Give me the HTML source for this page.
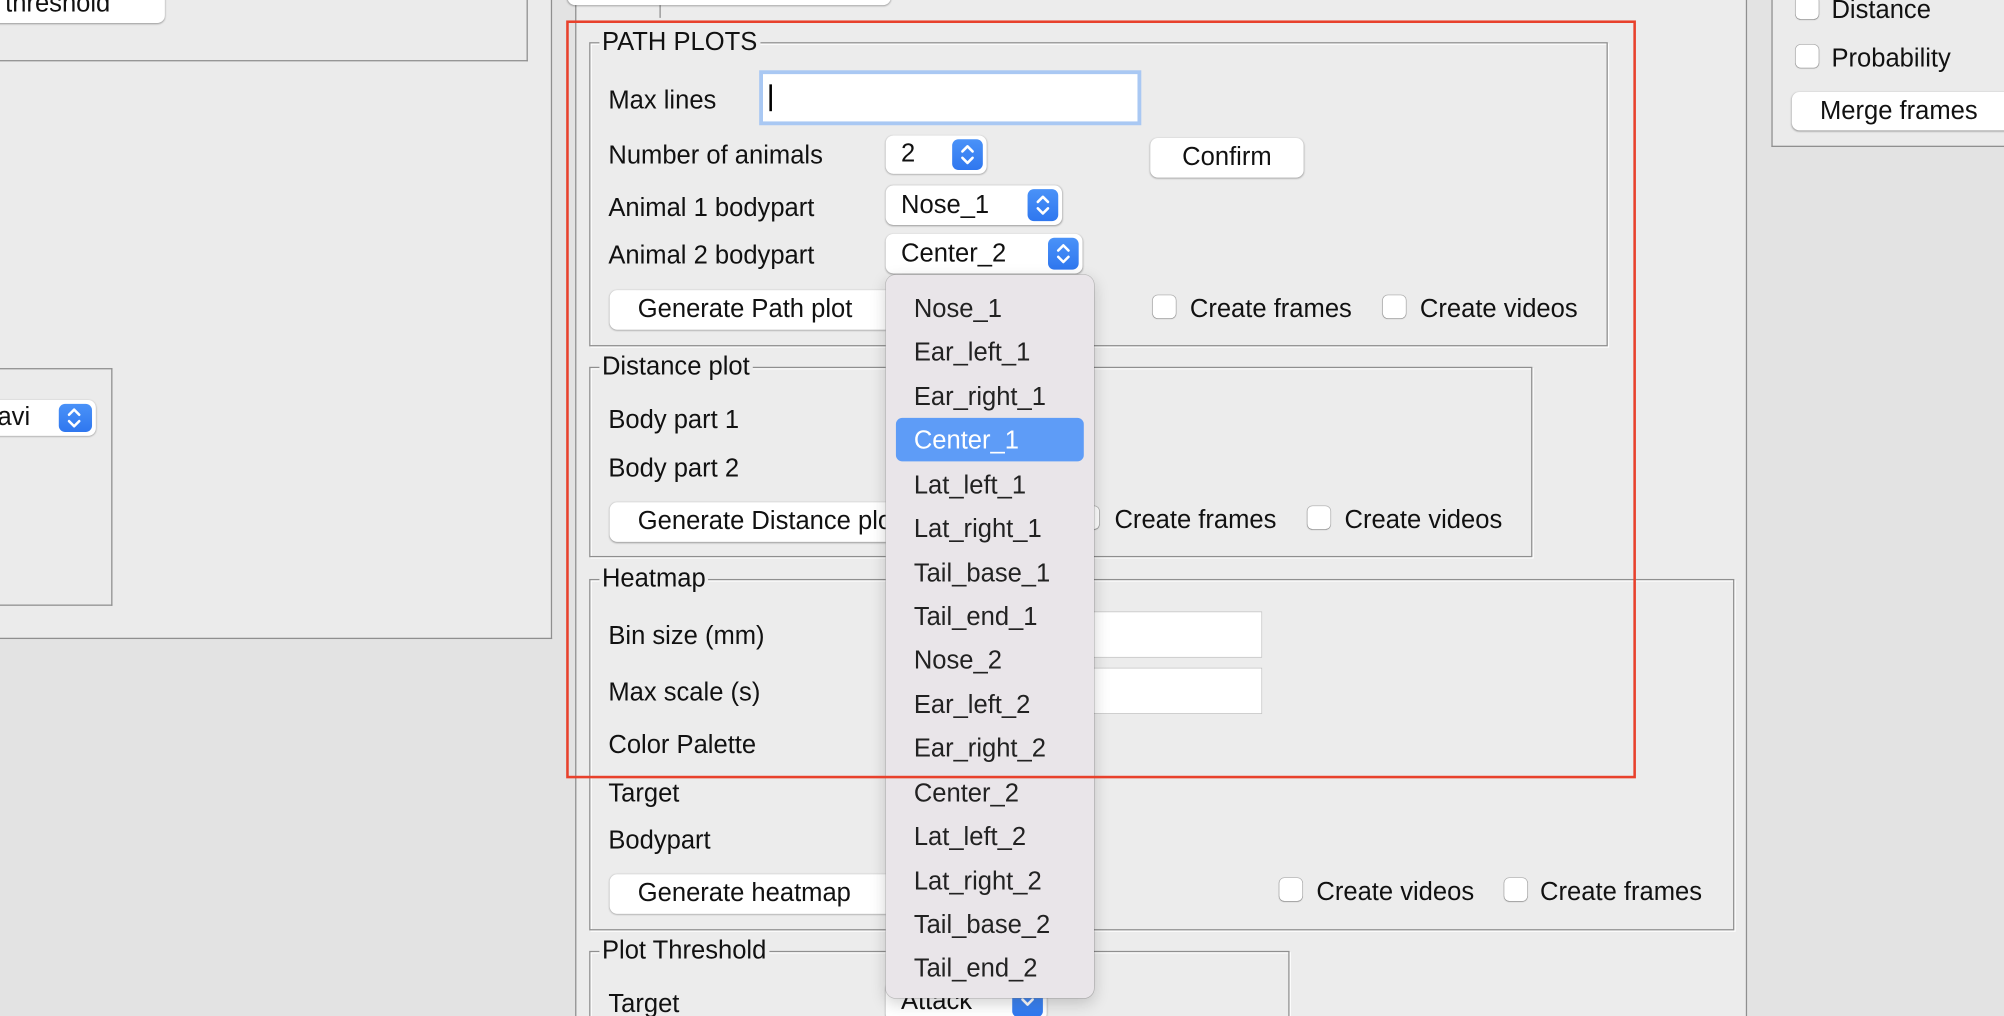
<!DOCTYPE html>
<html><head><meta charset="utf-8"><style>
html,body{margin:0;padding:0;width:2004px;height:1016px;overflow:hidden;background:#e3e3e3}
#s{position:absolute;left:0;top:0;width:1568px;height:795px;overflow:hidden;transform:scale(1.27806);transform-origin:0 0;font-family:"Liberation Sans",sans-serif;color:#111}
.a{position:absolute}
.t{position:absolute;font-size:20px;line-height:24px;white-space:nowrap}
.fs{position:absolute;border:1.5px solid #8f8f8f;box-shadow:inset 1px 1px 0 #fff,1px 1px 0 #fff}
.lg{position:absolute;font-size:20px;line-height:22px;background:#ececec;padding:0 2px;white-space:nowrap}
.btn{position:absolute;background:#fff;border-radius:6px;box-shadow:0 0.5px 1.5px rgba(0,0,0,.35);font-size:20px;line-height:31px;text-align:center;white-space:nowrap;overflow:hidden}
.sel{position:absolute;background:#fff;border-radius:6px;box-shadow:0 0.5px 1.5px rgba(0,0,0,.35);font-size:20px;white-space:nowrap}
.sel span{position:absolute;left:12px;top:50%;transform:translateY(-50%)}
.tab{position:absolute;right:3px;top:3px;bottom:3px;width:24px;border-radius:5px;background:linear-gradient(#4a92f8,#2f77ef)}
.tab svg{position:absolute;left:0;top:0;width:24px;height:100%}
.cb{position:absolute;width:18px;height:18px;background:#fff;border-radius:4px;box-shadow:0 0 0 .5px rgba(0,0,0,.25),0 .5px 1px rgba(0,0,0,.2)}
.inp{position:absolute;background:#fff;box-shadow:0 0 0 .5px #bbb}
.mi{position:absolute;left:22px;font-size:20px;line-height:24px;color:#222}
</style></head><body><div id="s">
<div class="a" style="left:0;top:0;width:431px;height:499px;background:#ebebeb;border-right:1.5px solid #8f8f8f;border-bottom:1.5px solid #8f8f8f"></div>
<div class="a" style="left:0;top:0;width:412px;height:47px;border-right:1.5px solid #8f8f8f;border-bottom:1.5px solid #8f8f8f"></div>
<div class="btn" style="left:-10px;top:-12px;width:125px;height:30px;text-align:left;padding-left:14px;line-height:30px">threshold</div>
<div class="a" style="left:0;top:288px;width:87px;height:184px;border-top:1.5px solid #8f8f8f;border-right:1.5px solid #8f8f8f;border-bottom:1.5px solid #8f8f8f"></div>
<div class="sel" style="left:-10px;top:313px;width:85px;height:28px"><span style="left:8px">avi</span><div class="tab" style="width:26px"><svg viewBox="0 0 24 22"><path d="M8 8.5l4-4 4 4M8 13.5l4 4 4-4" stroke="#fff" stroke-width="2" fill="none" stroke-linecap="round" stroke-linejoin="round"/></svg></div></div>
<div class="a" style="left:450px;top:-2px;width:915px;height:820px;background:#ececec;border-left:1.5px solid #8f8f8f;border-right:1.5px solid #8f8f8f"></div>
<div class="a" style="left:461px;top:-2px;width:55px;height:16px;border-right:1.5px solid #8f8f8f"></div>
<div class="btn" style="left:444px;top:-20px;width:253px;height:24px"></div>
<div class="a" style="left:1386px;top:-2px;width:200px;height:116px;background:#ebebeb;border-left:1.5px solid #8f8f8f;border-bottom:1.5px solid #8f8f8f"></div>
<div class="cb" style="left:1405px;top:-3px"></div><div class="t" style="left:1433px;top:-4px">Distance</div>
<div class="cb" style="left:1405px;top:35px"></div><div class="t" style="left:1433px;top:34px">Probability</div>
<div class="btn" style="left:1402px;top:72px;width:180px;height:30px;text-align:left;padding-left:22px">Merge frames</div>

<div class="fs" style="left:461px;top:33px;width:795px;height:236px"></div>
<div class="lg" style="left:469px;top:22px">PATH PLOTS</div>
<div class="t" style="left:476px;top:67px">Max lines</div>
<div class="inp" style="left:597px;top:58px;width:293px;height:37px;box-shadow:0 0 0 3px #a9c8f3,0 0 0 1px #7aa7e9"></div>
<div class="a" style="left:602px;top:66px;width:1.5px;height:21px;background:#000"></div>
<div class="t" style="left:476px;top:110px">Number of animals</div>
<div class="sel" style="left:693px;top:106px;width:79px;height:30px"><span>2</span><div class="tab"><svg viewBox="0 0 24 24"><path d="M8 9.5l4-4 4 4M8 14.5l4 4 4-4" stroke="#fff" stroke-width="2" fill="none" stroke-linecap="round" stroke-linejoin="round"/></svg></div></div>
<div class="btn" style="left:900px;top:108px;width:120px;height:31px">Confirm</div>
<div class="t" style="left:476px;top:151px">Animal 1 bodypart</div>
<div class="sel" style="left:693px;top:145px;width:138px;height:31px"><span>Nose_1</span><div class="tab"><svg viewBox="0 0 24 25"><path d="M8 10l4-4 4 4M8 15l4 4 4-4" stroke="#fff" stroke-width="2" fill="none" stroke-linecap="round" stroke-linejoin="round"/></svg></div></div>
<div class="t" style="left:476px;top:188px">Animal 2 bodypart</div>
<div class="sel" style="left:693px;top:183px;width:154px;height:31px"><span>Center_2</span><div class="tab"><svg viewBox="0 0 24 25"><path d="M8 10l4-4 4 4M8 15l4 4 4-4" stroke="#fff" stroke-width="2" fill="none" stroke-linecap="round" stroke-linejoin="round"/></svg></div></div>
<div class="btn" style="left:477px;top:227px;width:240px;height:31px;text-align:left;padding-left:22px">Generate Path plot</div>
<div class="cb" style="left:902px;top:231px"></div><div class="t" style="left:931px;top:230px">Create frames</div>
<div class="cb" style="left:1082px;top:231px"></div><div class="t" style="left:1111px;top:230px">Create videos</div>

<div class="fs" style="left:461px;top:287px;width:736px;height:147px"></div>
<div class="lg" style="left:469px;top:276px">Distance plot</div>
<div class="t" style="left:476px;top:317px">Body part 1</div>
<div class="t" style="left:476px;top:355px">Body part 2</div>
<div class="btn" style="left:477px;top:393px;width:240px;height:31px;text-align:left;padding-left:22px">Generate Distance plot</div>
<div class="cb" style="left:842px;top:396px"></div><div class="t" style="left:872px;top:395px">Create frames</div>
<div class="cb" style="left:1023px;top:396px"></div><div class="t" style="left:1052px;top:395px">Create videos</div>

<div class="fs" style="left:461px;top:453px;width:894px;height:273px"></div>
<div class="lg" style="left:469px;top:442px">Heatmap</div>
<div class="t" style="left:476px;top:486px">Bin size (mm)</div>
<div class="inp" style="left:700px;top:479px;width:287px;height:35px"></div>
<div class="t" style="left:476px;top:530px">Max scale (s)</div>
<div class="inp" style="left:700px;top:523px;width:287px;height:35px"></div>
<div class="t" style="left:476px;top:571px">Color Palette</div>
<div class="t" style="left:476px;top:609px">Target</div>
<div class="t" style="left:476px;top:646px">Bodypart</div>
<div class="btn" style="left:477px;top:684px;width:240px;height:31px;text-align:left;padding-left:22px">Generate heatmap</div>
<div class="cb" style="left:1001px;top:687px"></div><div class="t" style="left:1030px;top:686px">Create videos</div>
<div class="cb" style="left:1177px;top:687px"></div><div class="t" style="left:1205px;top:686px">Create frames</div>

<div class="fs" style="left:461px;top:744px;width:546px;height:80px"></div>
<div class="lg" style="left:469px;top:733px">Plot Threshold</div>
<div class="t" style="left:476px;top:774px">Target</div>
<div class="sel" style="left:693px;top:768px;width:126px;height:31px"><span>Attack</span><div class="tab"><svg viewBox="0 0 24 25"><path d="M8 11l4 4 4-4" stroke="#fff" stroke-width="2" fill="none" stroke-linecap="round" stroke-linejoin="round"/></svg></div></div>

<div class="a" style="left:693px;top:215px;width:163px;height:566px;background:#e9e5e9;border-radius:8px;box-shadow:0 0 0 .5px rgba(0,0,0,.2),0 4px 12px rgba(0,0,0,.18)">
<div class="a" style="left:8px;top:112px;width:147px;height:34px;background:#5e9cf7;border-radius:5px"></div>
<div class="mi" style="top:15px">Nose_1</div>
<div class="mi" style="top:49px">Ear_left_1</div>
<div class="mi" style="top:84px">Ear_right_1</div>
<div class="mi" style="top:118px;color:#fff">Center_1</div>
<div class="mi" style="top:153px">Lat_left_1</div>
<div class="mi" style="top:187px">Lat_right_1</div>
<div class="mi" style="top:222px">Tail_base_1</div>
<div class="mi" style="top:256px">Tail_end_1</div>
<div class="mi" style="top:290px">Nose_2</div>
<div class="mi" style="top:325px">Ear_left_2</div>
<div class="mi" style="top:359px">Ear_right_2</div>
<div class="mi" style="top:394px">Center_2</div>
<div class="mi" style="top:428px">Lat_left_2</div>
<div class="mi" style="top:463px">Lat_right_2</div>
<div class="mi" style="top:497px">Tail_base_2</div>
<div class="mi" style="top:531px">Tail_end_2</div>
</div>

<div class="a" style="left:443px;top:16px;width:833px;height:589px;border:2.2px solid #e8412c"></div>
</div></body></html>
